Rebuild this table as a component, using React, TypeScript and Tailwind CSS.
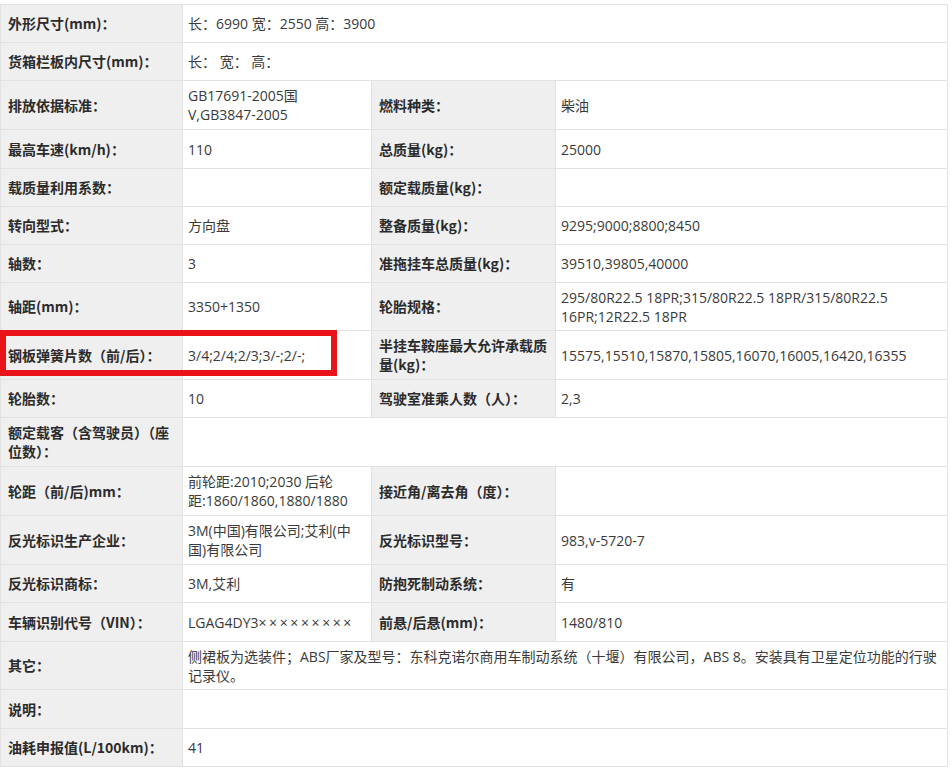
import type { ReactNode } from 'react';

type Row =
  | { kind: 'full'; h: string; label: string; value: ReactNode }
  | { kind: 'pair'; h: string; l1: string; v1: ReactNode; l2: string; v2: ReactNode };

const vin = (
  <>
    LGAG4DY3<span className="tracking-[2.6px]">×××××××××</span>
  </>
);

const rows: Row[] = [
  { kind: 'full', h: 'h-[38px]', label: '外形尺寸(mm)：', value: '长：6990 宽：2550 高：3900' },
  { kind: 'full', h: 'h-[38px]', label: '货箱栏板内尺寸(mm)：', value: '长： 宽： 高：' },
  { kind: 'pair', h: 'h-[49px]', l1: '排放依据标准：', v1: 'GB17691-2005国\nV,GB3847-2005', l2: '燃料种类：', v2: '柴油' },
  { kind: 'pair', h: 'h-[39px]', l1: '最高车速(km/h)：', v1: '110', l2: '总质量(kg)：', v2: '25000' },
  { kind: 'pair', h: 'h-[38px]', l1: '载质量利用系数：', v1: '', l2: '额定载质量(kg)：', v2: '' },
  { kind: 'pair', h: 'h-[38px]', l1: '转向型式：', v1: '方向盘', l2: '整备质量(kg)：', v2: '9295;9000;8800;8450' },
  { kind: 'pair', h: 'h-[38px]', l1: '轴数：', v1: '3', l2: '准拖挂车总质量(kg)：', v2: '39510,39805,40000' },
  { kind: 'pair', h: 'h-[48px]', l1: '轴距(mm)：', v1: '3350+1350', l2: '轮胎规格：', v2: '295/80R22.5 18PR;315/80R22.5 18PR/315/80R22.5\n16PR;12R22.5 18PR' },
  { kind: 'pair', h: 'h-[49px]', l1: '钢板弹簧片数（前/后）：', v1: '3/4;2/4;2/3;3/-;2/-;', l2: '半挂车鞍座最大允许承载质量(kg)：', v2: '15575,15510,15870,15805,16070,16005,16420,16355' },
  { kind: 'pair', h: 'h-[38px]', l1: '轮胎数：', v1: '10', l2: '驾驶室准乘人数（人）：', v2: '2,3' },
  { kind: 'full', h: 'h-[49px]', label: '额定载客（含驾驶员）（座位数）：', value: '' },
  { kind: 'pair', h: 'h-[49px]', l1: '轮距（前/后)mm：', v1: '前轮距:2010;2030 后轮\n距:1860/1860,1880/1880', l2: '接近角/离去角（度）：', v2: '' },
  { kind: 'pair', h: 'h-[49px]', l1: '反光标识生产企业：', v1: '3M(中国)有限公司;艾利(中\n国)有限公司', l2: '反光标识型号：', v2: '983,v-5720-7' },
  { kind: 'pair', h: 'h-[38px]', l1: '反光标识商标：', v1: '3M,艾利', l2: '防抱死制动系统：', v2: '有' },
  { kind: 'pair', h: 'h-[39px]', l1: '车辆识别代号（VIN）：', v1: vin, l2: '前悬/后悬(mm)：', v2: '1480/810' },
  { kind: 'full', h: 'h-[48px]', label: '其它：', value: '侧裙板为选装件；ABS厂家及型号：东科克诺尔商用车制动系统（十堰）有限公司，ABS 8。安装具有卫星定位功能的行驶\n记录仪。' },
  { kind: 'full', h: 'h-[39px]', label: '说明：', value: '' },
  { kind: 'full', h: 'h-[38px]', label: '油耗申报值(L/100km)：', value: '41' },
];

function Label({ text, h }: { text: string; h: string }) {
  return (
    <div className={`${h} flex items-center border-b border-r border-[#e2e2e2] bg-[#efefef] pl-[7px] pr-2 font-bold text-[#2b2b2b]`}>
      <span>{text}</span>
    </div>
  );
}

function Value({ text, h, span }: { text: ReactNode; h: string; span?: boolean }) {
  return (
    <div className={`${h} ${span ? 'col-span-3' : ''} flex items-center border-b border-r border-[#e2e2e2] bg-white pl-[5px] pr-1 font-['Open_Sans','Noto_Sans_CJK_SC',sans-serif] text-[#3a3a3a]`}>
      <span className="whitespace-pre-line">{text}</span>
    </div>
  );
}

export default function App() {
  return (
    <div className="h-[769px] w-[952px] overflow-hidden bg-white pt-[4px] font-['Noto_Sans_CJK_SC','Noto_Sans',sans-serif] text-[14px] leading-[19px]">
      <div className="relative w-[948px] border-t border-l border-[#e2e2e2]">
        <div className="grid grid-cols-[182px_189px_184px_392px]">
          {rows.map((r, i) =>
            r.kind === 'full' ? (
              <div key={i} className="contents">
                <Label text={r.label} h={r.h} />
                <Value text={r.value} h={r.h} span />
              </div>
            ) : (
              <div key={i} className="contents">
                <Label text={r.l1} h={r.h} />
                <Value text={r.v1} h={r.h} />
                <Label text={r.l2} h={r.h} />
                <Value text={r.v2} h={r.h} />
              </div>
            )
          )}
        </div>
        {/* highlight around 钢板弹簧片数 */}
        <div className="pointer-events-none absolute left-[-1px] top-[325px] h-[46px] w-[337px] border-[6px] border-[#e8141a]" />
      </div>
    </div>
  );
}
